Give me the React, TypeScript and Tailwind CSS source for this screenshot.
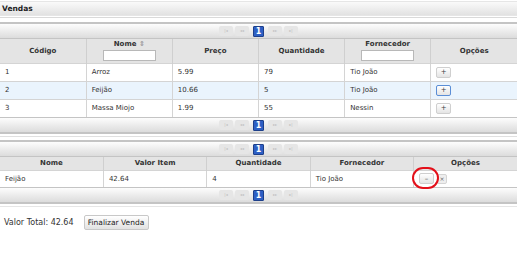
import React from 'react';

const produtos = [
  { codigo: 1, nome: 'Arroz', preco: '5.99', qtd: '79', fornecedor: 'Tio João' },
  { codigo: 2, nome: 'Feijão', preco: '10.66', qtd: '5', fornecedor: 'Tio João' },
  { codigo: 3, nome: 'Massa Miojo', preco: '1.99', qtd: '55', fornecedor: 'Nessin' },
];

const Paginator = () => (
  <div className="flex items-center justify-center gap-[2px] h-[16px] bg-gradient-to-b from-[#fdfdfd] to-[#dcdcdc] border-y border-[#c4c4c4]">
    <span className="w-[14px] h-[10px] rounded-[2px] bg-[#e6e6e6] text-[4px] leading-[10px] text-center text-[#c0c0c0]">|◂</span>
    <span className="w-[14px] h-[10px] rounded-[2px] bg-[#e6e6e6] text-[4px] leading-[10px] text-center text-[#c0c0c0]">◂◂</span>
    <span className="mx-[2px] w-[11px] h-[11px] rounded-[1px] bg-[#2d5fc4] border border-[#1d3f8a] text-[8px] leading-[9px] text-center font-bold text-white">1</span>
    <span className="w-[14px] h-[10px] rounded-[2px] bg-[#e6e6e6] text-[4px] leading-[10px] text-center text-[#c0c0c0]">▸▸</span>
    <span className="w-[14px] h-[10px] rounded-[2px] bg-[#e6e6e6] text-[4px] leading-[10px] text-center text-[#c0c0c0]">▸|</span>
  </div>
);

const SmallButton = ({ label, active }: { label: string; active?: boolean }) => (
  <span
    className={`inline-flex items-center justify-center w-[15px] h-[11px] rounded-[2px] border bg-gradient-to-b from-white to-[#e4e4e4] text-[7px] text-[#444] ${
      active ? 'border-[#5b8ed6]' : 'border-[#cfcfcf]'
    }`}
  >
    {label}
  </span>
);

export default function App() {
  return (
    <div className="w-[517px] h-[270px] bg-white text-[#333] text-[7px] font-['DejaVu_Sans',Verdana,sans-serif]">
      {/* Title bar */}
      <div className="h-[15px] mt-[1px] flex items-center px-[2px] font-bold text-[7.5px] text-[#222] bg-gradient-to-b from-[#fafafa] to-[#e2e2e2] border-t border-[#e6e6e6] border-b border-[#bdbdbd]">
        Vendas
      </div>
      <div className="h-[2px] border-b border-[#dadada]" />

      {/* Produtos */}
      <div className="mt-[4px] border-y border-[#c4c4c4]">
        <Paginator />
        <table className="w-full table-fixed border-collapse">
          <thead>
            <tr className="bg-[#e4e4e4] text-[#333]">
              <th className="h-[24px] border-r border-[#cfcfcf] font-bold">Código</th>
              <th className="border-r border-[#cfcfcf] font-bold align-top pt-[1px]">
                <div className="leading-[9px]">Nome <span className="text-[#999]">⇕</span></div>
                <div className="mx-auto mt-[1px] w-[53px] h-[11px] bg-white border border-[#b8b8b8]" />
              </th>
              <th className="border-r border-[#cfcfcf] font-bold">Preço</th>
              <th className="border-r border-[#cfcfcf] font-bold">Quantidade</th>
              <th className="border-r border-[#cfcfcf] font-bold align-top pt-[1px]">
                <div className="leading-[9px]">Fornecedor</div>
                <div className="mx-auto mt-[1px] w-[53px] h-[11px] bg-white border border-[#b8b8b8]" />
              </th>
              <th className="font-bold">Opções</th>
            </tr>
          </thead>
          <tbody>
            {produtos.map((p, i) => (
              <tr key={p.codigo} className={`h-[18px] border-t border-[#d4d4d4] ${i === 1 ? 'bg-[#eaf4fd]' : 'bg-white'}`}>
                <td className="px-[5px] border-r border-[#d4d4d4]">{p.codigo}</td>
                <td className="px-[5px] border-r border-[#d4d4d4]">{p.nome}</td>
                <td className="px-[5px] border-r border-[#d4d4d4]">{p.preco}</td>
                <td className="px-[5px] border-r border-[#d4d4d4]">{p.qtd}</td>
                <td className="px-[5px] border-r border-[#d4d4d4]">{p.fornecedor}</td>
                <td className="px-[5px]">
                  <SmallButton label="+" active={i === 1} />
                </td>
              </tr>
            ))}
          </tbody>
        </table>
        <Paginator />
      </div>
      <div className="h-[3px] border-b border-[#e0e0e0]" />

      {/* Itens da venda */}
      <div className="mt-[3px] border-y border-[#c4c4c4]">
        <Paginator />
        <table className="w-full table-fixed border-collapse">
          <thead>
            <tr className="bg-[#e4e4e4] h-[13px]">
              <th className="border-r border-[#cfcfcf] font-bold">Nome</th>
              <th className="border-r border-[#cfcfcf] font-bold">Valor Item</th>
              <th className="border-r border-[#cfcfcf] font-bold">Quantidade</th>
              <th className="border-r border-[#cfcfcf] font-bold">Fornecedor</th>
              <th className="font-bold">Opções</th>
            </tr>
          </thead>
          <tbody>
            <tr className="h-[17px] border-t border-[#d4d4d4] bg-white">
              <td className="px-[5px] border-r border-[#d4d4d4]">Feijão</td>
              <td className="px-[5px] border-r border-[#d4d4d4]">42.64</td>
              <td className="px-[5px] border-r border-[#d4d4d4]">4</td>
              <td className="px-[5px] border-r border-[#d4d4d4]">Tio João</td>
              <td className="px-[5px]">
                <div className="flex items-center gap-[3px]">
                  <span className="relative inline-flex">
                    <SmallButton label="–" />
                    <span className="absolute left-[-7px] top-[-6px] w-[27px] h-[22px] rounded-full border-[2px] border-[#e3101a]" />
                  </span>
                  <span className="inline-flex items-center justify-center w-[10px] h-[10px] rounded-[2px] border border-[#d4d4d4] bg-[#eeeeee] text-[6px] text-[#666]">×</span>
                </div>
              </td>
            </tr>
          </tbody>
        </table>
        <Paginator />
      </div>
      <div className="h-[3px] border-b border-[#e6e6e6]" />

      {/* Rodapé */}
      <div className="flex items-center gap-[10px] px-[4px] mt-[8px]">
        <span className="text-[8px] text-[#333]">Valor Total: 42.64</span>
        <button className="h-[15px] w-[65px] whitespace-nowrap rounded-[2px] border border-[#c8c8c8] bg-gradient-to-b from-white to-[#e2e2e2] text-[7.5px] text-[#222]">
          Finalizar Venda
        </button>
      </div>
    </div>
  );
}
